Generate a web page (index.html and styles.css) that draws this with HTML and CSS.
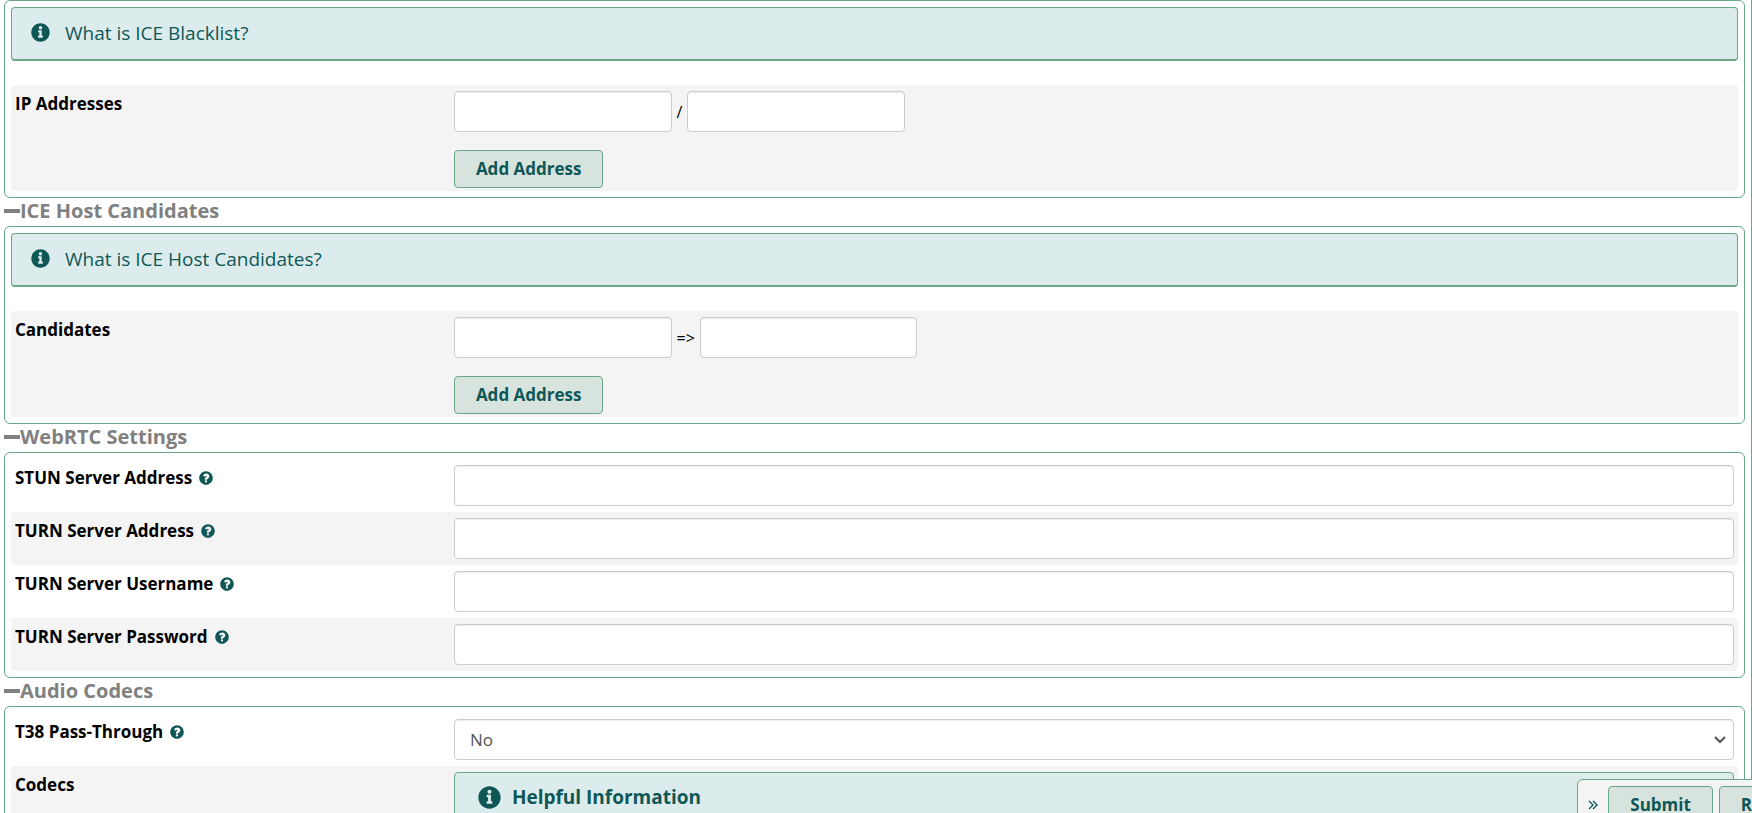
FILE: index.html
```html
<!DOCTYPE html>
<html lang="en">
<head>
<meta charset="utf-8">
<title>SIP Settings</title>
<link rel="stylesheet" href="styles.css">
</head>
<body>
<svg class="sprite" aria-hidden="true">
  <symbol id="info" viewBox="0 0 512 512"><path fill="currentColor" fill-rule="evenodd" d="M256 8C119 8 8 119 8 256s111 248 248 248 248-111 248-248S393 8 256 8zm0 76a46 46 0 1 1 0 92 46 46 0 0 1 0-92zm64 300c0 7-5 12-12 12H204c-7 0-12-5-12-12v-32c0-7 5-12 12-12h20V252h-20c-7 0-12-5-12-12v-32c0-7 5-12 12-12h72c7 0 12 5 12 12v132h20c7 0 12 5 12 12v32z"/></symbol>
  <symbol id="help" viewBox="0 0 512 512"><path fill="currentColor" fill-rule="evenodd" d="M256 8C119 8 8 119 8 256s111 248 248 248 248-111 248-248S393 8 256 8zm6 82c64 0 117 43 117 103 0 75-77 84-77 107v4c0 8-5 13-13 13h-64c-8 0-13-5-13-13v-9c0-67 75-73 75-99 0-15-15-23-31-23-20 0-30 10-44 27-4 5-11 6-17 2l-37-28c-5-4-7-11-3-17 26-38 59-67 107-67zm-6 250a42 42 0 1 1 0 84 42 42 0 0 1 0-84z"/></symbol>
</svg>
<main class="page">
  <section class="panel">
    <a class="note" href="#"><svg class="note-icon"><use href="#info"/></svg>What is ICE Blacklist?</a>
    <div class="row shaded">
      <label class="label" for="ip">IP Addresses</label>
      <div class="stack">
        <div class="pair"><input class="field short" id="ip" type="text"><span>/</span><input class="field short" type="text" aria-label="Netmask"></div>
        <button class="btn" type="button">Add Address</button>
      </div>
    </div>
  </section>

  <h2 class="heading"><span class="minus"></span>ICE Host Candidates</h2>
  <section class="panel">
    <a class="note" href="#"><svg class="note-icon"><use href="#info"/></svg>What is ICE Host Candidates?</a>
    <div class="row shaded">
      <label class="label" for="cand">Candidates</label>
      <div class="stack">
        <div class="pair"><input class="field short" id="cand" type="text"><span>=&gt;</span><input class="field short" type="text" aria-label="Advertised address"></div>
        <button class="btn" type="button">Add Address</button>
      </div>
    </div>
  </section>

  <h2 class="heading"><span class="minus"></span>WebRTC Settings</h2>
  <section class="panel">
    <div class="row"><label class="label" for="stun">STUN Server Address<svg class="help-icon"><use href="#help"/></svg></label><input class="field" id="stun" type="text"></div>
    <div class="row shaded"><label class="label" for="turn">TURN Server Address<svg class="help-icon"><use href="#help"/></svg></label><input class="field" id="turn" type="text"></div>
    <div class="row"><label class="label" for="user">TURN Server Username<svg class="help-icon"><use href="#help"/></svg></label><input class="field" id="user" type="text"></div>
    <div class="row shaded"><label class="label" for="pass">TURN Server Password<svg class="help-icon"><use href="#help"/></svg></label><input class="field" id="pass" type="password"></div>
  </section>

  <h2 class="heading"><span class="minus"></span>Audio Codecs</h2>
  <section class="panel">
    <div class="row">
      <label class="label" for="t38">T38 Pass-Through<svg class="help-icon"><use href="#help"/></svg></label>
      <div class="select-wrap">
        <select class="field select" id="t38"><option>No</option><option>Yes</option></select>
        <svg class="chevron" viewBox="0 0 12 8"><path d="M1 1l5 5 5-5" fill="none" stroke="currentColor" stroke-width="2"/></svg>
      </div>
    </div>
    <div class="row shaded">
      <span class="label">Codecs</span>
      <div class="helpful"><svg class="helpful-icon"><use href="#info"/></svg>Helpful Information</div>
    </div>
  </section>
</main>
<div class="actions">
  <button class="toggle" type="button" aria-label="Collapse"><svg class="toggle-icon" viewBox="0 0 10 10"><path d="M1 1l4 4-4 4M5 1l4 4-4 4" fill="none" stroke="currentColor" stroke-width="1.3"/></svg></button>
  <button class="btn" type="submit">Submit</button>
  <button class="btn" type="reset">Reset</button>
</div>
</body>
</html>
```

FILE: styles.css
```css
* { box-sizing: border-box; }
html { height: 100%; overflow: hidden; }
body {
  margin: 0;
  height: 100%;
  overflow: hidden;
  background: #fff;
  color: #000;
  font: 17px/26px "Open Sans", "Noto Sans", sans-serif;
}
.sprite { display: none; }
.page {
  min-height: 100%;
  padding: 0 6px 0 4px;
  border-right: 1px solid #6aa688;
}
.panel {
  padding: 6px;
  border: 1px solid #6aa688;
  border-radius: 6px;
}
.note {
  display: flex;
  align-items: center;
  gap: 15px;
  margin-bottom: 24px;
  padding: 12px 19px;
  border: 1px solid #6aa688;
  border-bottom-width: 2px;
  border-radius: 4px;
  background: #dcecec;
  color: #0f5757;
  font-size: 19px;
  line-height: 27px;
  text-decoration: none;
}
.note-icon { width: 19px; height: 19px; margin-bottom: 3px; }
.row {
  display: grid;
  grid-template-columns: 12fr 35fr;
  align-items: start;
  padding: 6px 4px;
  border-radius: 4px;
}
.shaded { background: #f4f4f4; }
.label {
  display: flex;
  align-items: center;
  gap: 7px;
  font-weight: 700;
}
.help-icon { width: 14px; height: 14px; color: #0f5757; }
.stack {
  display: flex;
  flex-direction: column;
  align-items: flex-start;
  gap: 18px;
  margin-bottom: -3px;
}
.pair {
  display: flex;
  align-items: center;
  gap: 5px;
  width: 100%;
  font-size: 16px;
}
.field {
  width: 100%;
  height: 41px;
  padding: 6px 15px;
  border: 1px solid #ccc;
  border-radius: 4px;
  background: #fff;
  box-shadow: inset 0 1px 1px rgba(0, 0, 0, 0.075);
  color: #555;
  font: inherit;
}
.short { width: 17%; }
.btn {
  height: 38px;
  padding: 0 21px;
  border: 1px solid #6aa688;
  border-radius: 4px;
  background: #d7e4dd;
  color: #0f5757;
  font: inherit;
  font-weight: 700;
}
.heading {
  display: flex;
  align-items: center;
  margin: 0;
  color: #808080;
  font-size: 20px;
  line-height: 25px;
  padding-bottom: 3px;
}
.minus { width: 16px; height: 4px; background: #808080; }
.select-wrap { display: grid; align-items: center; }
.select-wrap > * { grid-area: 1 / 1; }
.select { appearance: none; }
.chevron {
  width: 12px;
  height: 8px;
  margin-right: 8px;
  justify-self: end;
  color: #555;
  pointer-events: none;
}
.helpful {
  display: flex;
  align-items: flex-start;
  gap: 11px;
  min-height: 120px;
  padding: 11px 23px;
  border: 1px solid #6aa688;
  border-radius: 4px;
  background: #dcecec;
  color: #0f5757;
  font-size: 19px;
  line-height: 27px;
  font-weight: 700;
}
.helpful-icon { width: 23px; height: 23px; margin-top: 2px; }
.actions {
  position: fixed;
  right: -65px;
  bottom: -18px;
  display: flex;
  align-items: center;
  gap: 6px;
  padding: 6px;
  border: 1px solid #6aa688;
  border-radius: 6px;
  background: #f4f4f4;
}
.toggle {
  display: flex;
  padding: 4px;
  border: 0;
  background: none;
  color: #0f5757;
}
.toggle-icon { width: 10px; height: 10px; }
```
